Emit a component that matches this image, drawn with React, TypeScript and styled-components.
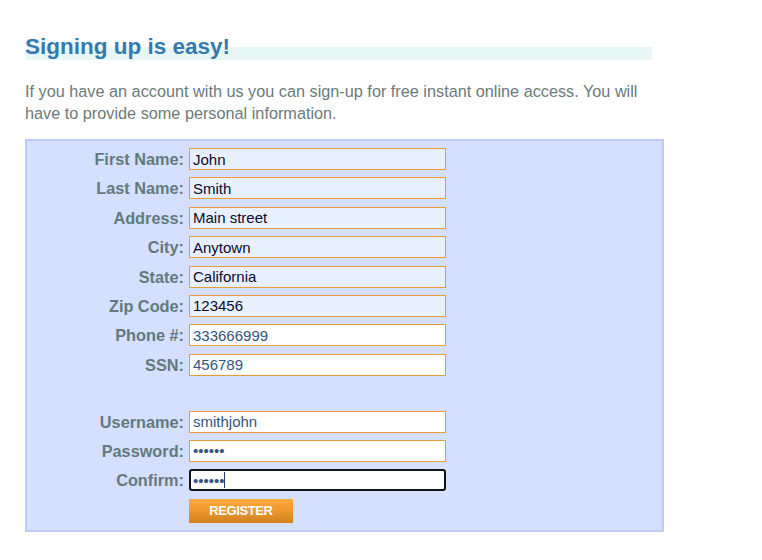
import React from "react";
import styled, { createGlobalStyle } from "styled-components";

const Global = createGlobalStyle`
  html, body { margin: 0; padding: 0; background: #ffffff; }
  body { font-family: "Liberation Sans", Arial, sans-serif; }
`;

const Page = styled.div`
  padding: 34px 0 0 25px;
  width: 640px;
`;

const Title = styled.h1`
  margin: 0;
  width: 627px;
  font-size: 22.5px;
  line-height: 26px;
  font-weight: bold;
  color: #3579b1;
  background: linear-gradient(to bottom, transparent 50%, #e8f6f6 50%);
`;

const Intro = styled.p`
  margin: 20px 0 0 0;
  width: 630px;
  font-size: 16.25px;
  line-height: 22px;
  color: #6b7a7b;
`;

const Panel = styled.form`
  margin-top: 15px;
  box-sizing: border-box;
  width: 639px;
  border: 2px solid #bccafb;
  background: #d4e0fe;
  padding: 7px 0 7px 0;
  display: grid;
  grid-template-columns: 157px 257px;
  column-gap: 5px;
  row-gap: 7.4px;
  align-items: center;
`;

const Label = styled.label`
  text-align: right;
  font-size: 16.3px;
  font-weight: bold;
  color: #637a7c;
  line-height: 22px;
`;

const Field = styled.div`
  position: relative;
  height: 22px;
`;

const Input = styled.input<{ $autofill?: boolean; $focused?: boolean }>`
  box-sizing: border-box;
  width: 257px;
  height: 22px;
  margin: 0;
  font-family: "Liberation Sans", Arial, sans-serif;
  font-size: 15px;
  border: ${(p) => (p.$focused ? "2px solid #111111" : "1px solid #eb9a3a")};
  border-radius: ${(p) => (p.$focused ? "3px" : "0")};
  padding: 0 0 0 ${(p) => (p.$focused ? "2px" : "3px")};
  background: ${(p) => (p.$autofill ? "#e8f0fe" : "#ffffff")};
  color: ${(p) => (p.$autofill ? "#0b0b2c" : "#33557c")};
  outline: none;
`;

const Caret = styled.span`
  position: absolute;
  left: 35px;
  top: 3px;
  width: 1px;
  height: 16px;
  background: #1c3b66;
`;

const Spacer = styled.div`
  grid-column: 1 / span 2;
  height: 20px;
`;

const Button = styled.button`
  grid-column: 2;
  width: 104px;
  height: 24px;
  margin: 0;
  padding: 0;
  border: none;
  background: linear-gradient(to bottom, #fbaa3e 0%, #f09a30 45%, #cf801f 100%);
  color: #ffffff;
  font-family: "Liberation Sans", Arial, sans-serif;
  font-size: 13px;
  font-weight: bold;
  letter-spacing: -0.4px;
  cursor: pointer;
`;

type Row = { label: string; value: string; autofill?: boolean; type?: string; focused?: boolean };

const personal: Row[] = [
  { label: "First Name:", value: "John", autofill: true },
  { label: "Last Name:", value: "Smith", autofill: true },
  { label: "Address:", value: "Main street", autofill: true },
  { label: "City:", value: "Anytown", autofill: true },
  { label: "State:", value: "California", autofill: true },
  { label: "Zip Code:", value: "123456", autofill: true },
  { label: "Phone #:", value: "333666999" },
  { label: "SSN:", value: "456789" },
];

const account: Row[] = [
  { label: "Username:", value: "smithjohn" },
  { label: "Password:", value: "secret", type: "password" },
  { label: "Confirm:", value: "secret", type: "password", focused: true },
];

const FormRow = ({ row }: { row: Row }) => (
  <>
    <Label>{row.label}</Label>
    <Field>
      <Input
        type={row.type ?? "text"}
        defaultValue={row.value}
        $autofill={row.autofill}
        $focused={row.focused}
      />
      {row.focused && <Caret />}
    </Field>
  </>
);

export default function App() {
  return (
    <Page>
      <Global />
      <Title>Signing up is easy!</Title>
      <Intro>
        If you have an account with us you can sign-up for free instant online access. You will
        have to provide some personal information.
      </Intro>
      <Panel onSubmit={(e) => e.preventDefault()}>
        {personal.map((r) => (
          <FormRow key={r.label} row={r} />
        ))}
        <Spacer />
        {account.map((r) => (
          <FormRow key={r.label} row={r} />
        ))}
        <Button type="submit">REGISTER</Button>
      </Panel>
    </Page>
  );
}
